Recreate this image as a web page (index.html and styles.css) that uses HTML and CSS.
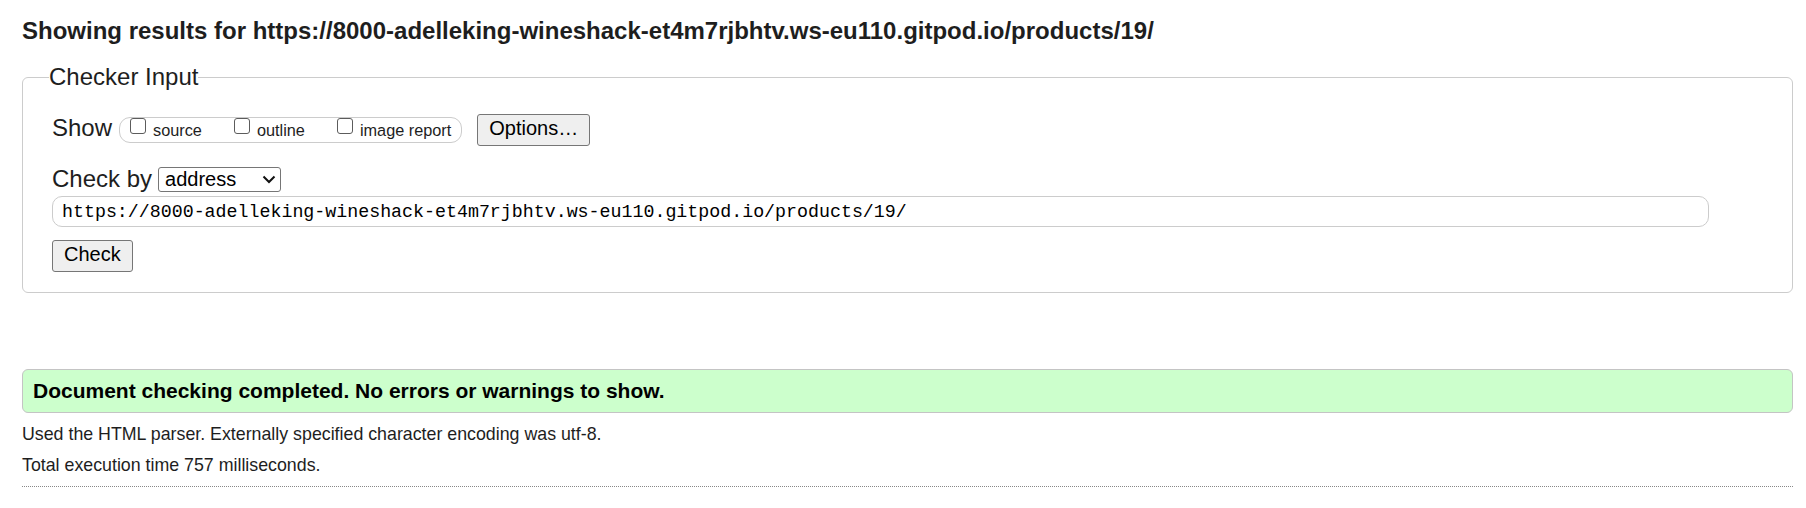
FILE: index.html
```html
<!DOCTYPE html>
<html lang="en">
<head>
<meta charset="utf-8">
<title>Showing results for https://8000-adelleking-wineshack-et4m7rjbhtv.ws-eu110.gitpod.io/products/19/ - Nu Html Checker</title>
<link rel="stylesheet" href="styles.css">
</head>
<body>
<h2 class="results-title">Showing results for https://8000-adelleking-wineshack-et4m7rjbhtv.ws-eu110.gitpod.io/products/19/</h2>
<form class="checker-form">
  <fieldset class="checker">
    <legend class="checker-legend">Checker Input</legend>
    <div class="show-row">
      <span class="row-label">Show</span>
      <span class="opt-group">
        <label class="opt"><input class="cb" type="checkbox"><span class="opt-text">source</span></label>
        <label class="opt"><input class="cb" type="checkbox"><span class="opt-text">outline</span></label>
        <label class="opt"><input class="cb" type="checkbox"><span class="opt-text">image report</span></label>
      </span>
      <button class="btn btn-options" type="button">Options…</button>
    </div>
    <div class="checkby-row">
      <label class="row-label">Check by</label>
      <span class="select-wrap">
        <select class="sel"><option>address</option></select>
        <svg class="chev" width="14" height="9" viewBox="0 0 14 9" aria-hidden="true"><path d="M1.5 1.5 L7 7 L12.5 1.5" fill="none" stroke="#111" stroke-width="2"/></svg>
      </span>
    </div>
    <input class="url" type="url" value="https://8000-adelleking-wineshack-et4m7rjbhtv.ws-eu110.gitpod.io/products/19/">
    <div class="submit-row"><button class="btn btn-check" type="submit">Check</button></div>
  </fieldset>
</form>
<p class="success">Document checking completed. No errors or warnings to show.</p>
<p class="details">Used the HTML parser. Externally specified character encoding was utf-8.</p>
<p class="details details-time">Total execution time 757 milliseconds.</p>
<hr class="sep">
</body>
</html>
```

FILE: styles.css
```css
html, body {
  margin: 0;
  padding: 0;
  background: #fff;
}
body {
  padding: 0 13px 0 22px;
  font-family: "Liberation Sans", Arial, sans-serif;
  color: #1e1e1e;
}
.results-title {
  margin: 18px 0 19px;
  font-size: 24px;
  line-height: 26px;
  font-weight: bold;
  white-space: nowrap;
}
.checker-form {
  margin: 0;
}
.checker {
  margin: 0;
  padding: 23px 20px 20px 29px;
  border: 1px solid #ccc;
  border-radius: 6px;
}
.checker-legend {
  margin-left: -3px;
  padding: 0;
  font-size: 24px;
  line-height: 28px;
}
.show-row {
  display: flex;
  align-items: flex-start;
}
.row-label {
  font-size: 24px;
  line-height: 27px;
}
.opt-group {
  display: flex;
  align-items: flex-start;
  gap: 32px;
  box-sizing: border-box;
  height: 26px;
  margin: 3px 0 0 7px;
  padding: 0 10px;
  border: 1px solid #ccc;
  border-radius: 11px;
}
.opt {
  display: flex;
  align-items: flex-start;
  gap: 7px;
}
.cb {
  appearance: none;
  -webkit-appearance: none;
  box-sizing: border-box;
  width: 16px;
  height: 16px;
  margin: 0;
  border: 1px solid #5c5c5c;
  border-radius: 3px;
  background: #fff;
}
.opt-text {
  margin-top: 3px;
  font-size: 16.3px;
  line-height: 18px;
}
.btn {
  box-sizing: border-box;
  height: 32px;
  padding: 2px 11px 5px;
  border: 1px solid #767676;
  border-radius: 3px;
  background: #efefef;
  color: #000;
  font-family: "Liberation Sans", Arial, sans-serif;
  font-size: 20px;
  line-height: 23px;
}
.btn-options {
  margin-left: 15px;
}
.checkby-row {
  display: flex;
  align-items: flex-start;
  gap: 6px;
  margin-top: 19px;
}
.select-wrap {
  position: relative;
  display: block;
  margin-top: 2px;
}
.sel {
  appearance: none;
  -webkit-appearance: none;
  box-sizing: border-box;
  width: 123px;
  height: 25px;
  margin: 0;
  padding: 0 0 0 6px;
  border: 1px solid #767676;
  border-radius: 3px;
  background: #fff;
  color: #000;
  font-family: "Liberation Sans", Arial, sans-serif;
  font-size: 20px;
  line-height: 23px;
}
.chev {
  position: absolute;
  right: 5px;
  top: 8px;
  pointer-events: none;
}
.url {
  display: block;
  box-sizing: border-box;
  width: 1657px;
  height: 31px;
  margin: 4px 0 0;
  padding: 0 9px;
  border: 1px solid #ccc;
  border-radius: 10px;
  background: #fff;
  color: #000;
  font-family: "Liberation Mono", "DejaVu Sans Mono", monospace;
  font-size: 18.3px;
}
.submit-row {
  margin-top: 13px;
}
.btn-check {
  display: block;
}
.success {
  margin: 76px 0 0;
  padding: 9px 10px 9px;
  border: 1px solid #c4c4c4;
  border-radius: 6px;
  background: #ccffcc;
  color: #000;
  font-size: 21px;
  line-height: 24px;
  font-weight: bold;
}
.details {
  margin: 11px 0 0;
  font-size: 17.8px;
  line-height: 21px;
}
.details-time {
  margin-top: 10px;
}
.sep {
  margin: 10px 0 0;
  height: 0;
  border: 0;
  border-top: 1px dotted #888;
}
```
